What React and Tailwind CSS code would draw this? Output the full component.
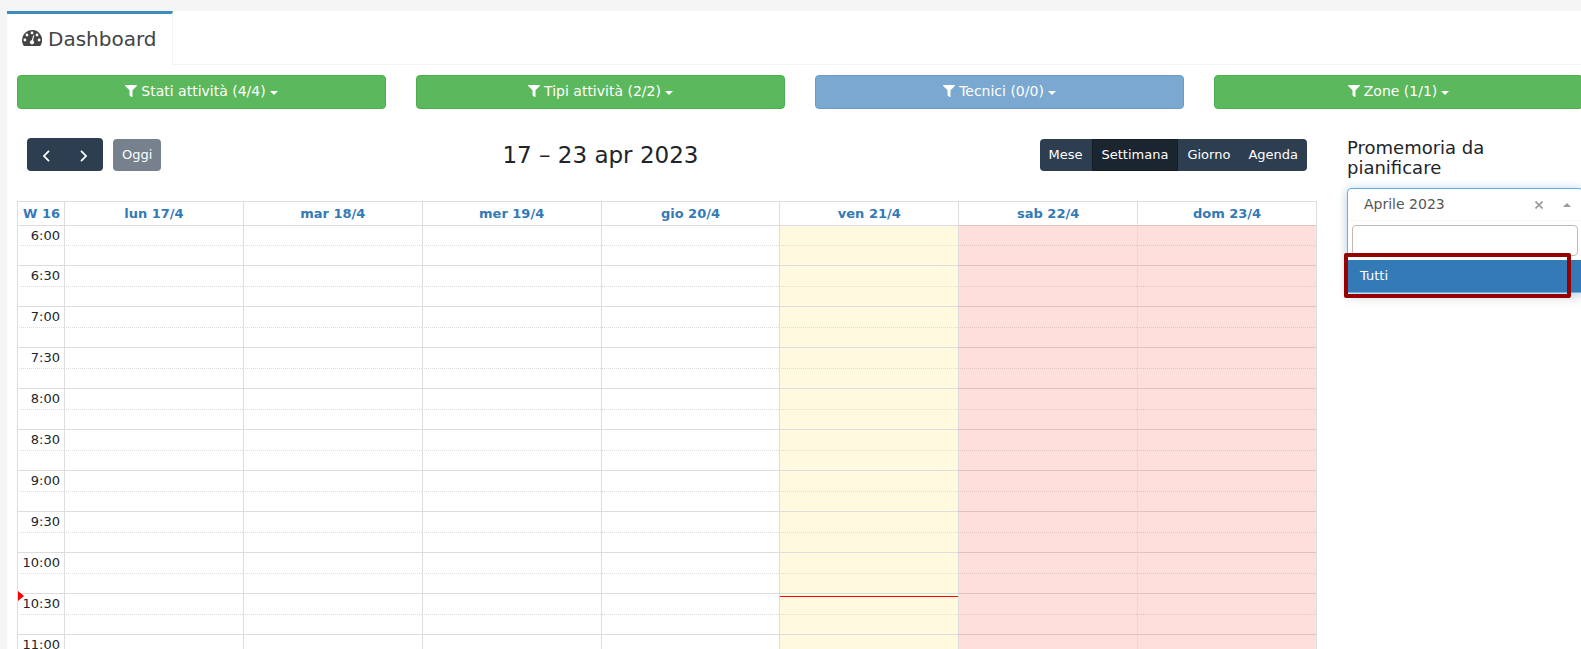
import React from "react";
import { FaFilter } from "react-icons/fa";

const filters = [
  { label: "Stati attività (4/4)", style: "bg-[#5cb85c] border-[#4cae4c]" },
  { label: "Tipi attività (2/2)", style: "bg-[#5cb85c] border-[#4cae4c]" },
  { label: "Tecnici (0/0)", style: "bg-[#7aa8d0] border-[#6d9dc7]" },
  { label: "Zone (1/1)", style: "bg-[#5cb85c] border-[#4cae4c]" },
];

const days = [
  { label: "lun 17/4", cell: "border-[#ddd]" },
  { label: "mar 18/4", cell: "border-[#ddd]" },
  { label: "mer 19/4", cell: "border-[#ddd]" },
  { label: "gio 20/4", cell: "border-[#ddd]" },
  { label: "ven 21/4", cell: "border-[#ddd] bg-[#fff9df]", today: true },
  { label: "sab 22/4", cell: "border-[#dfc3c1] border-l-[#ddd] bg-[#ffdfdc]" },
  { label: "dom 23/4", cell: "border-[#dfc3c1] border-l-[#ddd] bg-[#ffdfdc]" },
];

const times = ["6:00", "6:30", "7:00", "7:30", "8:00", "8:30", "9:00", "9:30", "10:00", "10:30", "11:00"];

const views = ["Mese", "Settimana", "Giorno", "Agenda"];

function GaugeIcon() {
  return (
    <svg viewBox="0 0 20 17" className="h-[17px] w-5" aria-hidden="true">
      <path
        fill="#444"
        d="M10 0A10 10 0 0 0 0 10c0 2 .5 3.8 1.500 5.400.2.4.6.600 1 .600h15c.4 0 .8-.2 1-.6A10 10 0 0 0 10 0z"
      />
      <g fill="#fff">
        <circle cx="10" cy="2.900" r="1.400" />
        <circle cx="5" cy="5" r="1.400" />
        <circle cx="15" cy="5" r="1.400" />
        <circle cx="2.900" cy="10" r="1.400" />
        <circle cx="17.100" cy="10" r="1.400" />
        <circle cx="10" cy="12.300" r="2.100" />
        <path d="M11.300 5.300l1 .3-1.500 5.600-1.300-.3z" />
      </g>
    </svg>
  );
}

function Chevron({ d }) {
  return (
    <svg viewBox="0 0 8 12" className="mt-0.5 h-3 w-2" fill="none" stroke="currentColor" strokeWidth="1.800" aria-hidden="true">
      <path d={d} />
    </svg>
  );
}

function Calendar() {
  return (
    <section className="col-span-10">
      <div className="flex items-center justify-between px-2.5 text-[13px] leading-[18px] text-white">
        <div className="flex items-center gap-2.5">
          <div className="flex rounded bg-[#2c3e50]">
            <button type="button" aria-label="Precedente" className="flex h-[33px] w-[38px] items-center justify-center">
              <Chevron d="M7 .8L2 6l5 5.200" />
            </button>
            <button type="button" aria-label="Successivo" className="flex h-[33px] w-[38px] items-center justify-center">
              <Chevron d="M1 .8L6 6l-5 5.200" />
            </button>
          </div>
          <button type="button" className="h-8 rounded bg-[#76818d] px-[9px]">Oggi</button>
        </div>
        <h2 className="text-[23px] leading-7 text-[#212529]">17 – 23 apr 2023</h2>
        <div className="flex overflow-hidden rounded bg-[#2c3e50]">
          {views.map((view) => (
            <button
              key={view}
              type="button"
              className={view === "Settimana" ? "h-8 border border-[#151e27] bg-[#1a252f] px-[9px]" : "h-8 px-[9px]"}
            >
              {view}
            </button>
          ))}
        </div>
      </div>

      <table className="mt-[30px] w-full table-fixed border-separate border-spacing-0 border-r border-[#ddd] text-[13px] leading-[18px] text-[#212529]">
        <thead>
          <tr className="h-6 text-[#337ab7]">
            <th className="w-[47px] border-t border-l border-[#ddd] p-0 pr-1 text-right font-bold">W 16</th>
            {days.map((day) => (
              <th key={day.label} className="border-t border-l border-[#ddd] p-0 text-center font-bold">
                <a href="#giorno">{day.label}</a>
              </th>
            ))}
          </tr>
        </thead>
        <tbody>
          {times.map((time, i) => (
            <React.Fragment key={time}>
              <tr className={i === 0 ? "h-5" : "h-[21px]"}>
                <th scope="row" className="relative border-t border-l border-[#ddd] p-0 pr-1 text-right font-normal">
                  {time === "10:30" && (
                    <span className="absolute top-[-3px] left-0 border-y-[5px] border-l-[6px] border-y-transparent border-l-[#f00]" />
                  )}
                  {time}
                </th>
                {days.map((day) => (
                  <td key={day.label} className={`relative border-t border-l p-0 ${day.cell}`}>
                    {day.today && time === "10:30" && (
                      <span className="absolute inset-x-0 top-0.5 border-t border-[#f00]" />
                    )}
                  </td>
                ))}
              </tr>
              <tr className="h-5">
                <td className="border-t border-l border-[#ddd] p-0 [border-top-style:dotted]" />
                {days.map((day) => (
                  <td key={day.label} className={`border-t border-l p-0 [border-top-style:dotted] ${day.cell}`} />
                ))}
              </tr>
            </React.Fragment>
          ))}
        </tbody>
      </table>
    </section>
  );
}

function Reminders() {
  return (
    <aside className="col-span-2">
      <h4 className="text-lg leading-5 text-[#212529]">Promemoria da pianificare</h4>
      <div className="relative mt-2.5 rounded-t border border-[#66afe9] bg-white shadow-[0_0_8px_rgba(102,175,233,0.4),0_6px_12px_rgba(0,0,0,0.1)]">
        <div className="flex h-8 items-center border-b border-[#f7f7f7] pr-[11px] pb-0.5 pl-4 text-sm text-[#555]">
          <span className="flex-1">Aprile 2023</span>
          <button type="button" aria-label="Rimuovi" className="mt-0.5 mr-5 text-[#999]">
            <svg viewBox="0 0 8 8" className="size-2" stroke="currentColor" strokeWidth="1.600" aria-hidden="true">
              <path d="M.5.5l7 7M7.500.5l-7 7" />
            </svg>
          </button>
          <span className="mt-0.5 border-x-4 border-b-4 border-x-transparent border-b-[#999]" />
        </div>
        <div className="p-1">
          <input type="text" aria-label="Cerca" className="block h-[31px] w-full rounded border border-[#bbb] bg-white px-1 text-sm outline-none" />
        </div>
        <button type="button" className="block h-8 w-full bg-[#337ab7] px-3 text-left text-[13px] text-white">
          Tutti
        </button>
        <div className="pointer-events-none absolute top-16 right-[11px] -left-1 h-[45px] rounded-xs border-4 border-[#960000]" />
      </div>
    </aside>
  );
}

export default function App() {
  return (
    <div className="h-screen overflow-hidden bg-[#f5f5f5] pt-[11px] pl-[7px] font-['DejaVu_Sans',sans-serif]">
      <div className="min-h-full bg-white">
        <nav className="flex border-b border-[#f4f4f4]">
          <a
            href="#dashboard"
            className="-mb-px flex h-[54px] items-center gap-1.5 border-t-3 border-r border-t-[#3c8dbc] border-r-[#f4f4f4] bg-white pr-[15px] pb-0.5 pl-[15px] text-xl text-[#444]"
          >
            <GaugeIcon />
            Dashboard
          </a>
        </nav>
        <main className="-mr-0.5 pt-2.5 pl-2.5">
          <div className="grid grid-cols-4 gap-[30px]">
            {filters.map((filter) => (
              <button
                key={filter.label}
                type="button"
                className={`flex h-[34px] items-center justify-center gap-1 rounded border pb-0.5 text-sm text-white ${filter.style}`}
              >
                <FaFilter className="size-3" />
                <span>{filter.label}</span>
                <span className="mt-1 border-x-4 border-t-4 border-x-transparent border-t-white" />
              </button>
            ))}
          </div>
          <div className="mt-[29px] grid grid-cols-12 gap-[30px]">
            <Calendar />
            <Reminders />
          </div>
        </main>
      </div>
    </div>
  );
}
